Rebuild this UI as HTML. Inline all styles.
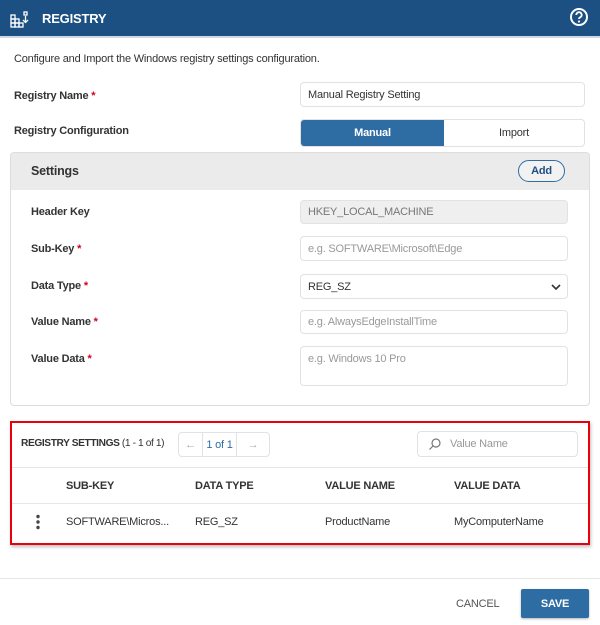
<!DOCTYPE html>
<html><head><meta charset="utf-8"><style>
*{box-sizing:border-box;margin:0;padding:0}
body{width:600px;height:625px;background:#fff;font-family:"Liberation Sans",sans-serif;font-size:11px;color:#333;position:relative;overflow:hidden;letter-spacing:-0.2px}
.a{position:absolute}
.hdr{left:0;top:0;width:600px;height:38px;background:#1c4f82;border-bottom:2px solid #d0d8e2}
.lbl{position:absolute;left:14px;color:#333;font-weight:bold;font-size:11px}
.req{color:#d0021b}
.inp{position:absolute;border:1px solid #e2e2e2;border-radius:4px;background:#fff;padding-left:7px;display:flex;align-items:center;font-size:11px;color:#333}
.ph{color:#999}
.th{position:absolute;font-weight:bold;font-size:11px;color:#333;top:480px}
.td{position:absolute;font-size:11px;color:#333;top:516px}
</style></head><body>
<div class="a hdr">
<svg class="a" style="left:10px;top:11px" width="20" height="18" viewBox="0 0 20 18" fill="none" stroke="#fff" stroke-width="1.3">
<rect x="1" y="4" width="4" height="4"/><rect x="1" y="8" width="4" height="4"/><rect x="5" y="8" width="4" height="4"/><rect x="1" y="12" width="4" height="4"/><rect x="5" y="12" width="4" height="4"/><rect x="9" y="12" width="4" height="4"/>
<rect x="14" y="1" width="3" height="3"/><path d="M15.5 5v6M13 9l2.5 2.5L18 9"/></svg>
<div class="a" style="left:42px;top:11px;color:#fff;font-weight:bold;font-size:13px">REGISTRY</div>
<svg class="a" style="left:569px;top:7px" width="20" height="20" viewBox="0 0 20 20"><circle cx="10" cy="10" r="8" fill="none" stroke="#fff" stroke-width="2"/><path d="M7.3 8a2.7 2.7 0 1 1 3.7 2.4c-.8.4-1 .8-1 1.6" fill="none" stroke="#fff" stroke-width="1.8"/><circle cx="10" cy="14.5" r="1.1" fill="#fff"/></svg>
</div>
<div class="a" style="left:14px;top:53px;color:#333">Configure and Import the Windows registry settings configuration.</div>
<div class="lbl" style="top:90px">Registry Name <span class="req">*</span></div>
<div class="lbl" style="top:125px">Registry Configuration</div>
<div class="inp" style="left:300px;top:82px;width:285px;height:25px">Manual Registry Setting</div>
<div class="a" style="left:300px;top:119px;width:285px;height:28px;border:1px solid #e2e2e2;border-radius:4px;overflow:hidden;display:flex">
<div style="width:143px;background:#2e6da4;color:#fff;font-weight:bold;display:flex;align-items:center;justify-content:center">Manual</div>
<div style="flex:1;display:flex;align-items:center;justify-content:center">Import</div></div>
<div class="a" style="left:10px;top:152px;width:580px;height:254px;border:1px solid #ddd;border-radius:4px;overflow:hidden">
<div style="height:37px;background:#ebebeb"></div></div>
<div class="a" style="left:31px;top:164px;font-weight:bold;font-size:12.5px">Settings</div>
<div class="a" style="left:518px;top:160px;width:47px;height:22px;border:1.5px solid #2e6da4;border-radius:11px;color:#1c4f82;font-weight:bold;display:flex;align-items:center;justify-content:center;background:#f2f2f2">Add</div>
<div class="lbl" style="left:31px;top:206px">Header Key</div>
<div class="lbl" style="left:31px;top:243px">Sub-Key <span class="req">*</span></div>
<div class="lbl" style="left:31px;top:280px">Data Type <span class="req">*</span></div>
<div class="lbl" style="left:31px;top:316px">Value Name <span class="req">*</span></div>
<div class="lbl" style="left:31px;top:353px">Value Data <span class="req">*</span></div>
<div class="inp" style="left:300px;top:200px;width:268px;height:24px;background:#efefef;color:#777">HKEY_LOCAL_MACHINE</div>
<div class="inp ph" style="left:300px;top:236px;width:268px;height:25px">e.g. SOFTWARE\Microsoft\Edge</div>
<div class="inp" style="left:300px;top:274px;width:268px;height:25px">REG_SZ
<svg class="a" style="left:250px;top:9px" width="10" height="7" viewBox="0 0 10 7"><path d="M1 1l4 4 4-4" fill="none" stroke="#333" stroke-width="1.6"/></svg></div>
<div class="inp ph" style="left:300px;top:310px;width:268px;height:24px">e.g. AlwaysEdgeInstallTime</div>
<div class="inp ph" style="left:300px;top:346px;width:268px;height:40px;align-items:flex-start;padding-top:6px">e.g. Windows 10 Pro</div>
<div class="a" style="left:10px;top:421px;width:580px;height:124px;border:2px solid #e8000b;box-shadow:1px 2px 3px rgba(0,0,0,.25)"></div>
<div class="a" style="left:21px;top:438px;font-size:10.2px;letter-spacing:-0.4px;white-space:nowrap"><b>REGISTRY SETTINGS</b> (1 - 1 of 1)</div>
<div class="a" style="left:178px;top:432px;width:92px;height:25px;border:1px solid #e2e2e2;border-radius:4px;display:flex;background:#fff">
<div style="width:24px;border-right:1px solid #e2e2e2;color:#aaa;display:flex;align-items:center;justify-content:center">←</div>
<div style="width:34px;border-right:1px solid #e2e2e2;color:#2e6da4;display:flex;align-items:center;justify-content:center;padding:0 2px">1 of 1</div>
<div style="flex:1;color:#aaa;display:flex;align-items:center;justify-content:center">→</div></div>
<div class="inp ph" style="left:417px;top:431px;width:161px;height:26px;padding-left:10px">
<svg width="14" height="14" viewBox="0 0 14 14" style="margin-right:8px"><circle cx="8" cy="6" r="4" fill="none" stroke="#777" stroke-width="1.2"/><path d="M5 9l-3.5 3.5" stroke="#777" stroke-width="1.2"/></svg>Value Name</div>
<div class="a" style="left:12px;top:467px;width:576px;height:1px;background:#e6e6e6"></div>
<div class="a" style="left:12px;top:503px;width:576px;height:1px;background:#e6e6e6"></div>
<div class="th" style="left:66px">SUB-KEY</div>
<div class="th" style="left:195px">DATA TYPE</div>
<div class="th" style="left:325px">VALUE NAME</div>
<div class="th" style="left:454px">VALUE DATA</div>
<svg class="a" style="left:35px;top:514px" width="6" height="16"><circle cx="3" cy="2.5" r="1.7" fill="#444"/><circle cx="3" cy="8" r="1.7" fill="#444"/><circle cx="3" cy="13.5" r="1.7" fill="#444"/></svg>
<div class="td" style="left:66px">SOFTWARE\Micros...</div>
<div class="td" style="left:195px">REG_SZ</div>
<div class="td" style="left:325px">ProductName</div>
<div class="td" style="left:454px">MyComputerName</div>
<div class="a" style="left:0;top:578px;width:600px;height:1px;background:#e6e6e6"></div>
<div class="a" style="left:456px;top:598px;color:#555">CANCEL</div>
<div class="a" style="left:521px;top:589px;width:68px;height:29px;background:#2e6da4;border-radius:2px;color:#fff;font-weight:bold;display:flex;align-items:center;justify-content:center;box-shadow:0 1px 2px rgba(0,0,0,.3)">SAVE</div>
</body></html>
